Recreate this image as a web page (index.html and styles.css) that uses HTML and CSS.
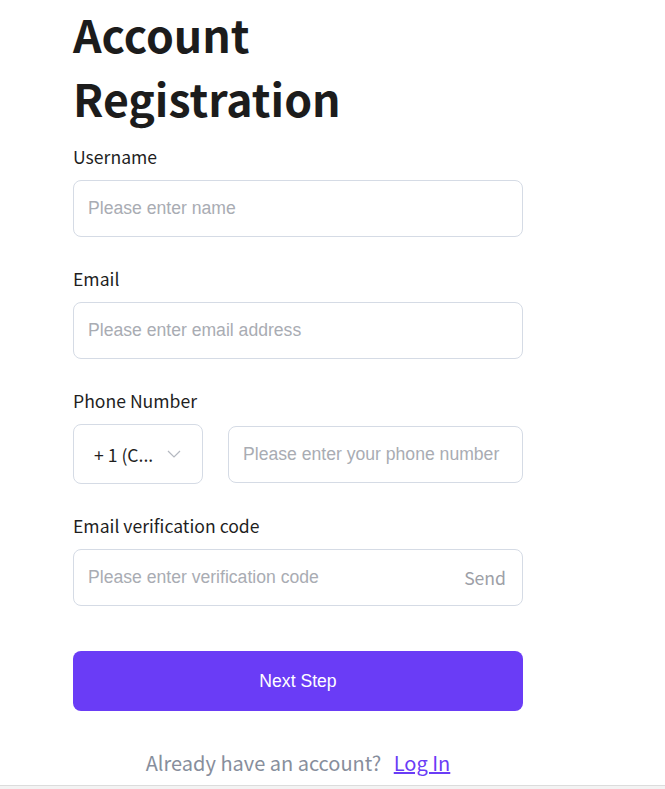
FILE: index.html
```html
<!DOCTYPE html>
<html lang="en">
<head>
<meta charset="utf-8">
<title>Account Registration</title>
<link rel="stylesheet" href="styles.css">
</head>
<body>
<main class="page">
  <form class="form">
    <h1 class="title">Account<br>Registration</h1>

    <div class="field">
      <label class="label">Username</label>
      <div class="box"><span class="ph">Please enter name</span></div>
    </div>

    <div class="field">
      <label class="label">Email</label>
      <div class="box"><span class="ph">Please enter email address</span></div>
    </div>

    <div class="field">
      <label class="label">Phone Number</label>
      <div class="phone-row">
        <div class="select">
          <span class="select-text">+ 1 (C...</span>
          <svg class="chev" width="14" height="8" viewBox="0 0 14 8"><path d="M1 1l6 6 6-6" fill="none" stroke="#b4b8c0" stroke-width="1.2"/></svg>
        </div>
        <div class="box phone-box"><span class="ph">Please enter your phone number</span></div>
      </div>
    </div>

    <div class="field">
      <label class="label">Email verification code</label>
      <div class="box code-box"><span class="ph">Please enter verification code</span><span class="send">Send</span></div>
    </div>

    <button type="button" class="next">Next Step</button>

    <p class="login">Already have an account? <a href="#" class="login-link">Log In</a></p>
  </form>
  <div class="footer"></div>
</main>
</body>
</html>
```
FILE: styles.css
```css
html, body {
  margin: 0;
  padding: 0;
  background: #ffffff;
}
.page {
  display: flex;
  flex-direction: column;
}
.form {
  width: 450px;
  margin-left: 73px;
  display: flex;
  flex-direction: column;
  font-family: "Noto Sans CJK SC", "Noto Sans", sans-serif;
}
.title {
  margin: 2px 0 15px 0;
  font-size: 44.6px;
  line-height: 64px;
  font-weight: 700;
  color: #1c1c1c;
}
.field {
  display: flex;
  flex-direction: column;
  margin-bottom: 30px;
}
.label {
  font-size: 17.6px;
  line-height: 24px;
  color: #1f1f1f;
  margin-bottom: 11px;
}
.box {
  box-sizing: border-box;
  height: 57px;
  border: 1px solid #d5dbe5;
  border-radius: 8px;
  display: flex;
  align-items: center;
  padding: 0 16px 0 14px;
}
.ph {
  font-family: "Liberation Sans", Arial, sans-serif;
  font-size: 17.6px;
  color: #a9acb3;
  flex: 1;
}
.phone-row {
  display: flex;
  align-items: center;
  gap: 25px;
}
.select {
  box-sizing: border-box;
  width: 130px;
  height: 60px;
  border: 1px solid #d5dbe5;
  border-radius: 8px;
  display: flex;
  align-items: center;
  padding: 0 21px 0 20px;
}
.select-text {
  font-size: 17.6px;
  color: #1f1f1f;
  flex: 1;
}
.chev {
  display: block;
}
.phone-box {
  flex: 1;
}
.send {
  font-size: 17.6px;
  color: #9da0a7;
}
.next {
  margin-top: 15px;
  height: 60px;
  border: none;
  border-radius: 8px;
  background: #6a3cf6;
  color: #ffffff;
  font-family: "Liberation Sans", Arial, sans-serif;
  font-size: 17.6px;
}
.login {
  margin: 37px 0 0 0;
  text-align: center;
  font-size: 20px;
  line-height: 30px;
  color: #878e9c;
}
.login-link {
  margin-left: 8px;
  color: #6a3cf6;
  text-decoration: underline;
}
.footer {
  margin-top: 7px;
  height: 40px;
  border-top: 1px solid #dcdcdc;
  background: #f3f3f3;
}
```
